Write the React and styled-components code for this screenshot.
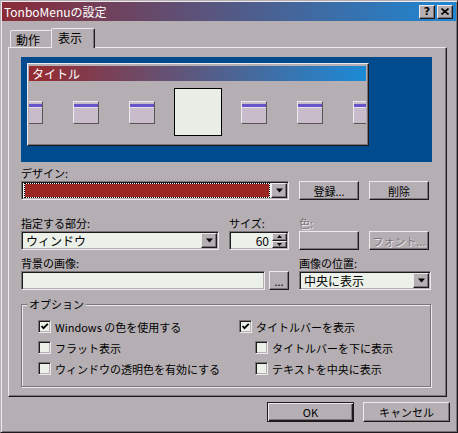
import React from "react";
import styled, { createGlobalStyle } from "styled-components";

const face = "#b5afb3";
const hi = "#eeeaec";
const lo = "#7b7579";
const dk = "#1c1a1c";
const fieldBg = "#ebf0e8";

const GlobalStyle = createGlobalStyle`
  body {
    margin: 0;
    background: ${face};
  }
  * {
    box-sizing: border-box;
  }
`;

const raised = `
  border: 1px solid;
  border-color: ${hi} ${dk} ${dk} ${hi};
  box-shadow: inset -1px -1px 0 ${lo};
`;

const sunken = `
  border: 1px solid;
  border-color: ${lo} ${hi} ${hi} ${lo};
  box-shadow: inset 1px 1px 0 ${dk}, inset -1px -1px 0 ${face};
`;

const Window = styled.div`
  width: 458px;
  height: 433px;
  background: ${face};
  border: 1px solid;
  border-color: ${face} ${dk} ${dk} ${face};
  box-shadow: inset 1px 1px 0 ${hi}, inset -1px -1px 0 ${lo};
  padding: 1px;
  display: flex;
  flex-direction: column;
  font-family: "Noto Sans CJK JP", "Noto Sans", sans-serif;
  font-size: 11px;
  color: #000;
`;

const TitleBar = styled.div`
  height: 19px;
  display: flex;
  align-items: center;
  justify-content: space-between;
  padding: 0 3px 0 2px;
  background: linear-gradient(to right, #8a2b37, #1d87d3);
  color: #fff;
  font-size: 12px;
  line-height: 19px;
`;

const CaptionButtons = styled.div`
  display: flex;
  gap: 2px;
`;

const CaptionButton = styled.div`
  width: 16px;
  height: 14px;
  background: ${face};
  ${raised}
  display: flex;
  align-items: center;
  justify-content: center;
  color: #000;
  font-family: "DejaVu Sans", sans-serif;
  font-weight: bold;
  font-size: 11px;
  line-height: 12px;
`;

const Body = styled.div`
  padding-left: 6px;
  display: flex;
  flex-direction: column;
`;

const TabStrip = styled.div`
  height: 26px;
  display: flex;
  align-items: flex-end;
  padding-left: 2px;
  font-size: 12px;
`;

const Tab = styled.div`
  position: relative;
  z-index: ${(p) => (p.$active ? 1 : 0)};
  width: ${(p) => (p.$active ? 44 : 43)}px;
  height: ${(p) => (p.$active ? 20 : 17)}px;
  margin-left: ${(p) => (p.$active ? -2 : 0)}px;
  margin-bottom: ${(p) => (p.$active ? -1 : 0)}px;
  padding: 0 0 ${(p) => (p.$active ? 2 : 0)}px ${(p) => (p.$active ? 6 : 5)}px;
  background: ${face};
  border: 1px solid;
  border-bottom: none;
  border-color: ${hi} ${dk} transparent ${hi};
  border-radius: 2px 2px 0 0;
  box-shadow: inset -1px 0 0 ${lo};
  display: flex;
  align-items: center;
`;

const Panel = styled.div`
  width: 439px;
  height: 350px;
  border: 1px solid;
  border-color: ${hi} ${dk} ${dk} ${hi};
  box-shadow: inset -1px -1px 0 ${lo};
  padding: 9px 0 0 12px;
`;

const Preview = styled.div`
  width: 411px;
  height: 105px;
  background: #004b8d;
  padding: 6px;
`;

const PreviewWindow = styled.div`
  width: 342px;
  height: 83px;
  background: ${face};
  border: 1px solid;
  border-color: ${hi} ${dk} ${dk} ${hi};
  box-shadow: inset -1px -1px 0 ${lo};
  padding: 2px 2px 2px 1px;
  display: flex;
  flex-direction: column;
`;

const PreviewTitle = styled.div`
  height: 15px;
  line-height: 15px;
  padding-left: 3px;
  color: #fff;
  font-size: 12px;
  background: linear-gradient(to right, #972a2f, #1c8ad6);
`;

const ItemRow = styled.div`
  flex: 1;
  display: flex;
  align-items: center;
  overflow: hidden;
`;

const Slot = styled.div`
  flex: 0 0 56px;
  display: flex;
  justify-content: center;
  &:first-child {
    margin-left: -27px;
  }
`;

const MenuItem = styled.div`
  width: 26px;
  height: 23px;
  background: #c8bcca;
  border: 1px solid;
  border-color: ${hi} #5a5458 #5a5458 ${hi};
  padding: 2px 0 0;
`;

const MenuBar = styled.div`
  height: 4px;
  background: #6656c9;
  border-bottom: 1px solid #e4dce6;
`;

const BigItem = styled.div`
  width: 48px;
  height: 48px;
  background: #e9efe6;
  border: 1px solid #000;
`;

const Form = styled.div`
  margin-top: 3px;
  display: grid;
  grid-template-columns: 198px 60px 60px 60px;
  grid-template-rows: 16px 19px 31px 19px 21px 19px;
  column-gap: 10px;
`;

const Label = styled.div`
  grid-column: ${(p) => p.$span || "auto"};
  align-self: end;
  line-height: 16px;
  white-space: nowrap;
  color: ${(p) => (p.$disabled ? lo : "#000")};
  text-shadow: ${(p) => (p.$disabled ? `1px 1px 0 ${hi}` : "none")};
`;

const Combo = styled.div`
  grid-column: ${(p) => p.$span || "auto"};
  width: ${(p) => (p.$width ? `${p.$width}px` : "auto")};
  height: 19px;
  background: ${fieldBg};
  ${sunken}
  padding: 1px;
  display: flex;
`;

const ComboText = styled.div`
  flex: 1;
  padding-left: 3px;
  line-height: 15px;
  font-size: 12px;
  white-space: nowrap;
`;

const FocusRect = styled.div`
  flex: 1;
  margin: 0 1px 0 1px;
  background: #fff;
  border: 1px dotted #000;
`;

const Swatch = styled.div`
  height: 100%;
  background: #9b2722;
`;

const ArrowButton = styled.div`
  width: 16px;
  height: 15px;
  background: ${face};
  ${raised}
  display: flex;
  align-items: center;
  justify-content: center;
`;

const Button = styled.div`
  height: ${(p) => p.$height || 19}px;
  width: ${(p) => (p.$width ? `${p.$width}px` : "auto")};
  background: ${face};
  ${raised}
  display: flex;
  align-items: center;
  justify-content: center;
  white-space: nowrap;
  color: ${(p) => (p.$disabled ? lo : "#000")};
  text-shadow: ${(p) => (p.$disabled ? `1px 1px 0 ${hi}` : "none")};
`;

const DefaultButton = styled(Button)`
  border: 1px solid ${dk};
  box-shadow: inset 1px 1px 0 ${hi}, inset -1px -1px 0 ${dk},
    inset -2px -2px 0 ${lo};
`;

const Spinner = styled.div`
  height: 19px;
  background: ${fieldBg};
  ${sunken}
  padding: 1px;
  display: flex;
`;

const SpinValue = styled.div`
  flex: 1;
  text-align: right;
  padding-right: 3px;
  line-height: 15px;
  font-size: 12px;
`;

const SpinButtons = styled.div`
  width: 15px;
  display: flex;
  flex-direction: column;
`;

const SpinButton = styled.div`
  flex: 1;
  background: ${face};
  ${raised}
  display: flex;
  align-items: center;
  justify-content: center;
`;

const FileRow = styled.div`
  grid-column: 1 / 3;
  display: flex;
  gap: 4px;
`;

const TextInput = styled.div`
  flex: 1;
  height: 19px;
  background: ${fieldBg};
  ${sunken}
`;

const GroupBox = styled.fieldset`
  margin: 8px 0 0;
  width: 410px;
  padding: 6px 0 7px 16px;
  border: 1px solid ${lo};
  box-shadow: inset 1px 1px 0 ${hi}, 1px 1px 0 ${hi};
`;

const Legend = styled.legend`
  margin-left: -11px;
  padding: 0 2px;
  line-height: 12px;
  background: ${face};
`;

const Options = styled.div`
  display: grid;
  grid-template-columns: 201px 1fr;
  grid-auto-rows: 21px;
`;

const CheckRow = styled.label`
  display: flex;
  align-items: center;
  gap: 4px;
  padding-left: ${(p) => (p.$indent ? 16 : 0)}px;
  white-space: nowrap;
`;

const Box = styled.span`
  width: 13px;
  height: 13px;
  background: ${fieldBg};
  ${sunken}
  display: flex;
  align-items: center;
  justify-content: center;
`;

const Footer = styled.div`
  display: flex;
  justify-content: flex-end;
  gap: 9px;
  padding: 5px 6px 0 0;
`;

const Down = ({ size = 7 }) => (
  <svg width={size} height={Math.ceil(size / 2) + 1} viewBox="0 0 7 4">
    <path d="M0 0H7L3.5 4Z" fill="#000" />
  </svg>
);

const Tri = ({ up }) => (
  <svg width="5" height="3" viewBox="0 0 5 3">
    <path d={up ? "M0 3H5L2.5 0Z" : "M0 0H5L2.5 3Z"} fill="#000" />
  </svg>
);

const Check = ({ checked, label, indent }) => (
  <CheckRow $indent={indent}>
    <Box>
      {checked && (
        <svg width="9" height="9" viewBox="0 0 9 9">
          <path d="M1.5 4 L3.5 6.2 L7.8 1.8" fill="none" stroke="#000" strokeWidth="1.8" />
        </svg>
      )}
    </Box>
    {label}
  </CheckRow>
);

const PreviewItem = () => (
  <MenuItem>
    <MenuBar />
  </MenuItem>
);

export default function App() {
  return (
    <>
      <GlobalStyle />
      <Window>
        <TitleBar>
          <span>TonboMenuの設定</span>
          <CaptionButtons>
            <CaptionButton>?</CaptionButton>
            <CaptionButton>
              <svg width="8" height="7" viewBox="0 0 8 7">
                <path d="M0.5 0.5 L7.5 6.5 M7.5 0.5 L0.5 6.5" stroke="#000" strokeWidth="1.6" />
              </svg>
            </CaptionButton>
          </CaptionButtons>
        </TitleBar>

        <Body>
          <TabStrip>
            <Tab>動作</Tab>
            <Tab $active>表示</Tab>
          </TabStrip>

          <Panel>
            <Preview>
              <PreviewWindow>
                <PreviewTitle>タイトル</PreviewTitle>
                <ItemRow>
                  <Slot><PreviewItem /></Slot>
                  <Slot><PreviewItem /></Slot>
                  <Slot><PreviewItem /></Slot>
                  <Slot><BigItem /></Slot>
                  <Slot><PreviewItem /></Slot>
                  <Slot><PreviewItem /></Slot>
                  <Slot><PreviewItem /></Slot>
                </ItemRow>
              </PreviewWindow>
            </Preview>

            <Form>
              <Label $span="1 / 5">デザイン:</Label>

              <Combo $span="1 / 3">
                <FocusRect>
                  <Swatch />
                </FocusRect>
                <ArrowButton><Down /></ArrowButton>
              </Combo>
              <Button>登録...</Button>
              <Button>削除</Button>

              <Label>指定する部分:</Label>
              <Label>サイズ:</Label>
              <Label $disabled>色:</Label>
              <span />

              <Combo>
                <ComboText>ウィンドウ</ComboText>
                <ArrowButton><Down /></ArrowButton>
              </Combo>
              <Spinner>
                <SpinValue>60</SpinValue>
                <SpinButtons>
                  <SpinButton><Tri up /></SpinButton>
                  <SpinButton><Tri /></SpinButton>
                </SpinButtons>
              </Spinner>
              <Button />
              <Button $disabled>フォント...</Button>

              <Label $span="1 / 3">背景の画像:</Label>
              <Label $span="3 / 5">画像の位置:</Label>

              <FileRow>
                <TextInput />
                <Button $width={20}>...</Button>
              </FileRow>
              <Combo $span="3 / 5" $width={132}>
                <ComboText>中央に表示</ComboText>
                <ArrowButton><Down /></ArrowButton>
              </Combo>
            </Form>

            <GroupBox>
              <Legend>オプション</Legend>
              <Options>
                <Check checked label="Windows の色を使用する" />
                <Check checked label="タイトルバーを表示" />
                <Check label="フラット表示" />
                <Check indent label="タイトルバーを下に表示" />
                <Check label="ウィンドウの透明色を有効にする" />
                <Check indent label="テキストを中央に表示" />
              </Options>
            </GroupBox>
          </Panel>

          <Footer>
            <DefaultButton $width={87} $height={20}>OK</DefaultButton>
            <Button $width={87} $height={20}>キャンセル</Button>
          </Footer>
        </Body>
      </Window>
    </>
  );
}
